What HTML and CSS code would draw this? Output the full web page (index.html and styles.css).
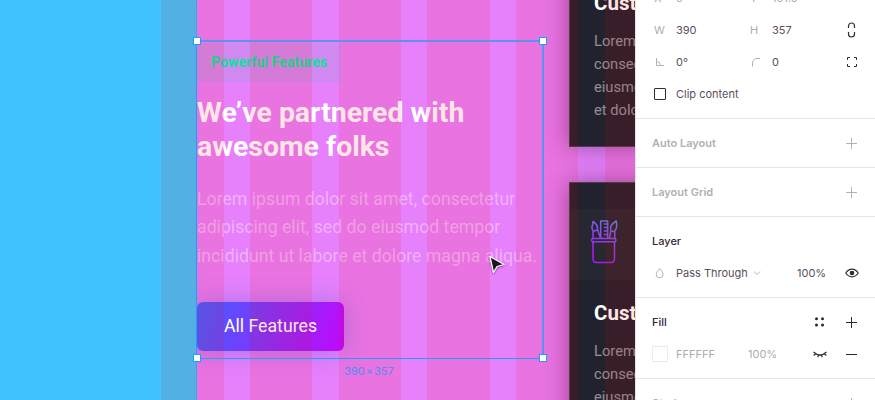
FILE: index.html
```html
<!DOCTYPE html>
<html lang="en">
<head>
<meta charset="utf-8">
<title>Design editor</title>
<link rel="stylesheet" href="styles.css">
</head>
<body>
<div class="editor">
  <main class="canvas">
    <div class="frame">
      <section class="intro">
        <span class="badge">Powerful Features</span>
        <h1>We’ve partnered with<br>awesome folks</h1>
        <p>Lorem ipsum dolor sit amet, consectetur<br>adipiscing elit, sed do eiusmod tempor<br>incididunt ut labore et dolore magna aliqua.</p>
        <a class="button">All Features</a>
      </section>
      <div class="cards">
        <article class="card">
          <div class="card-icon"></div>
          <h2>Cust</h2>
          <p>Lorem<br>consec<br>eiusmo<br>et dolo</p>
        </article>
        <article class="card">
          <div class="card-icon">
            <svg width="28" height="46" viewBox="0 0 28 46" fill="none" stroke="url(#ink)" stroke-width="1.5" stroke-linejoin="round" stroke-linecap="round">
              <defs><linearGradient id="ink" gradientUnits="userSpaceOnUse" x1="4" y1="38" x2="26" y2="4"><stop offset="0" stop-color="#ac16f4"/><stop offset=".45" stop-color="#953bee"/><stop offset="1" stop-color="#607ee5"/></linearGradient></defs>
              <rect x="1.8" y="19.5" width="24" height="3.2" rx="1"/>
              <path d="M3 23v17q0 3.5 3.5 3.5h14.500q3.500 0 3.500-3.500V23"/>
              <path d="M10.700 19V2h7v17M17.500 5h-3M17.500 8.500h-3M17.500 12h-3M17.500 15.500h-3"/>
              <path d="M3 19V11.500q-2-3-.5-5l.5-4q5 3 4.500 8l3 8.500M3 11.500q2 1.500 4.500-1"/>
              <path d="M19.500 19l1.500-7.500q-2-5 5.200-9.500 1.500 7-1.500 10v7M21 11.500q1.500 1.500 3.700.5"/>
            </svg>
          </div>
          <h2>Cust</h2>
          <p>Lorem<br>consec<br>eiusmo<br>et dolo</p>
        </article>
      </div>
    </div>
    <div class="layout-columns"><i></i><i></i><i></i><i></i><i></i><i></i></div>
    <div class="guide"></div>
    <div class="selection">
      <b class="handle nw"></b><b class="handle ne"></b><b class="handle sw"></b><b class="handle se"></b>
      <span class="dimensions">390<small>×</small>357</span>
    </div>
    <svg class="cursor" width="20" height="22" viewBox="0 0 20 22"><path d="M2 2.500L16 10.500L9 12.500L5.500 18.500Z" fill="#17171c" stroke="#fff" stroke-width="1.200" stroke-linejoin="round"/></svg>
  </main>
  <aside class="inspector">
    <section class="geometry">
      <div class="row fields"><span class="key">X</span><span class="muted">0</span><span class="key">Y</span><span class="muted">161.5</span></div>
      <div class="row fields"><span class="key">W</span><span>390</span><span class="key">H</span><span>357</span>
        <svg width="16" height="16" viewBox="0 0 16 16" fill="none" stroke="#332d33" stroke-width="1.200"><path d="M4.500 6V4a3 3 0 0 1 6 0v2M4.500 10v2a3 3 0 0 0 6 0v-2"/></svg></div>
      <div class="row fields">
        <svg width="12" height="12" viewBox="0 0 12 12" fill="none" stroke="#b3b3b3"><path d="M4.500 2v7.500H12M4.500 5.500a4 4 0 0 1 4 4"/></svg><span>0°</span>
        <svg width="12" height="12" viewBox="0 0 12 12" fill="none" stroke="#b3b3b3"><path d="M4.500 10.500V7a4.500 4.500 0 0 1 4.500-4.500H12"/></svg><span>0</span>
        <svg width="16" height="16" viewBox="0 0 16 16" fill="none" stroke="#332d33"><path d="M3.500 6V3.500H6M10 3.500h2.500V6M12.500 10v2.500H10M6 12.500H3.500V10"/></svg></div>
      <div class="row fields"><span class="checkbox"></span><span>Clip content</span></div>
    </section>
    <section class="off"><div class="row"><h3>Auto Layout</h3><i class="plus"></i></div></section>
    <section class="off"><div class="row"><h3>Layout Grid</h3><i class="plus"></i></div></section>
    <section>
      <div class="row"><h3>Layer</h3></div>
      <div class="row layer">
        <svg width="16" height="16" viewBox="0 0 16 16" fill="none" stroke="#b3b3b3"><path d="M7.700 3.500Q4.200 7 4.200 9.300a3.500 3.500 0 0 0 7 0Q11.200 7 7.700 3.500Z"/></svg>
        <span class="mode">Pass Through</span>
        <svg width="8" height="8" viewBox="0 0 8 8" fill="none" stroke="#b3b3b3"><path d="M1 2.500l3 3 3-3"/></svg>
        <span class="opacity">100%</span>
        <svg class="eye" width="16" height="16" viewBox="0 0 16 16" fill="none" stroke="#332d33" stroke-width="1.200"><path d="M1.800 8q2.500-3.800 6.200-3.800T14.200 8q-2.500 3.800-6.200 3.800T1.800 8Z"/><circle cx="8" cy="8" r="1.700" fill="#332d33"/></svg>
      </div>
    </section>
    <section>
      <div class="row"><h3>Fill</h3>
        <svg class="styles" width="16" height="16" viewBox="0 0 16 16" fill="#2a2732"><circle cx="4.500" cy="4.700" r="1.500"/><circle cx="10.500" cy="4.700" r="1.500"/><circle cx="4.500" cy="10.900" r="1.500"/><circle cx="10.500" cy="10.900" r="1.500"/></svg>
        <i class="plus"></i></div>
      <div class="row fill">
        <span class="swatch"></span><span class="hex">FFFFFF</span><span class="muted">100%</span>
        <svg width="16" height="16" viewBox="0 0 16 16" fill="none" stroke="#332d33" stroke-width="1.200"><path d="M1.500 6Q8 12 14.500 6M3.700 7.500l-2 2M6.500 9l-.7 2.200M9.500 9l.7 2.200M12.300 7.500l2 2"/></svg>
        <i class="minus"></i>
      </div>
    </section>
    <section class="off"><div class="row"><h3>Stroke</h3><i class="plus"></i></div></section>
  </aside>
</div>
</body>
</html>
```
FILE: styles.css
```css
* { box-sizing: border-box; }
body { margin: 0; overflow: hidden; }
h1, h2, h3, p { margin: 0; }
svg { display: block; flex: none; }
.editor { display: flex; width: 875px; height: 400px; overflow: hidden; }

/* Canvas */
.canvas {
  position: relative; width: 635px; height: 400px; overflow: hidden;
  background: #40c4ff; font-family: Roboto, sans-serif;
}
.frame { display: flex; height: 400px; margin-left: 197px; overflow: hidden; background: #e680fb; }
.intro { width: 372px; flex: none; padding-top: 43px; white-space: nowrap; }
.badge {
  display: block; width: 144px; height: 39px; padding-left: 14px;
  background: rgba(33, 211, 151, .11);
  color: #08e49c; font-size: 14.150px; font-weight: 700; line-height: 39px;
}
.intro h1 { margin-top: 14px; color: #fff; font-size: 28.400px; font-weight: 700; line-height: 34px; }
.intro p { margin-top: 21px; color: rgba(255, 255, 255, .4); font-size: 17.720px; line-height: 28.300px; }
.button {
  display: block; width: 147px; height: 49px; margin-top: 32px; border-radius: 6px;
  background: linear-gradient(108deg, #435fff, #b70ffa 92%, #bd08ff);
  box-shadow: 0 0 24px rgba(72, 95, 210, .38);
  color: #fff; font-size: 17.700px; line-height: 49px; text-align: center;
}
.cards { display: flex; flex-direction: column; flex: none; width: 346px; gap: 35px; margin-top: -128px; }
.card {
  flex: none; height: 275px; border: 1px solid #4b3e4b; background: #21222d;
  box-shadow: 0 0 22px rgba(40, 18, 45, .45); white-space: nowrap;
}
.card-icon {
  height: 71px; margin-top: 26px; padding: 10px 0 0 20px;
  background: rgba(255, 255, 255, .025);
}
.card h2 { margin: 21px 0 0 24px; color: #fff; font-size: 20.500px; font-weight: 700; line-height: 24px; }
.card p { margin: 14.500px 0 0 24px; color: rgba(255, 255, 255, .5); font-size: 14.700px; line-height: 23.200px; }

/* Editor overlays */
.layout-columns {
  position: absolute; inset: 0; width: 700px; padding-left: 161.300px;
  display: grid; grid-template-columns: repeat(6, 62.300px); column-gap: 26.400px;
}
.layout-columns i { background: rgba(255, 0, 0, .1); }
.guide { position: absolute; left: 196px; top: 0; height: 400px; border-left: 1px dotted #18a0fb; }
.selection {
  position: absolute; left: 196px; top: 40px; width: 348px; height: 319px;
  border: solid #18a0fb; border-width: 2px 2px 1px 1px;
  border-top-color: #5d92ef; border-right-color: #5d92ef;
}
.handle { position: absolute; width: 8px; height: 8px; border: 1px solid #18a0fb; background: #fff; }
.nw { left: -4px; top: -5px; }
.ne { right: -5px; top: -5px; }
.sw { left: -4px; bottom: -4px; }
.se { right: -5px; bottom: -4px; }
.dimensions {
  position: absolute; top: 322px; left: 0; width: 344px; text-align: center;
  color: #4c8ff2; font: 11px/14px Inter, sans-serif;
}
.dimensions small { margin: 0 1px; font-size: 11px; }
.cursor { position: absolute; left: 488px; top: 254px; filter: drop-shadow(0 1px 1px rgba(0, 0, 0, .4)); }

/* Inspector */
.inspector {
  width: 240px; flex: none; border-left: 1px solid #e5e5e5; background: #fff;
  color: #5a505a; font: 11px/16px Inter, sans-serif;
}
.inspector section { padding: 8px 16px; border-bottom: 1px solid #e5e5e5; }
.inspector .geometry { margin-top: -26px; }
.row { display: flex; align-items: center; height: 32px; white-space: nowrap; }
.row h3 { flex: 1; color: #2f293c; font-size: 11px; font-weight: 500; }
.off h3 { color: #b3b0b0; font-weight: 600; }
.fields { display: grid; grid-template-columns: 24px 72px 24px 72px 16px; }
.key, .muted, .hex { color: #b0aaaa; }
.key { padding-left: 2px; }
.checkbox { width: 12px; height: 12px; margin-left: 2px; border: 1px solid #332d33; border-radius: 1px; }
.plus, .minus {
  width: 11px; height: 11px; margin-right: 2px; color: #2a2732;
  background: linear-gradient(currentColor, currentColor) center / 11px 1px no-repeat;
}
.plus {
  background: linear-gradient(currentColor, currentColor) center / 11px 1px no-repeat,
    linear-gradient(currentColor, currentColor) center / 1px 11px no-repeat;
}
.off .plus { color: #b3b3b3; }
.styles { margin-right: 18px; }
.eye { margin-right: -1px; }
.mode { margin: 0 5px 0 8px; }
.opacity { width: 47px; margin-left: auto; }
.fill { display: grid; grid-template-columns: 24px 72px 64px 34px 13px; }
.swatch { width: 16px; height: 16px; border: 1px solid #ebebeb; }
```
